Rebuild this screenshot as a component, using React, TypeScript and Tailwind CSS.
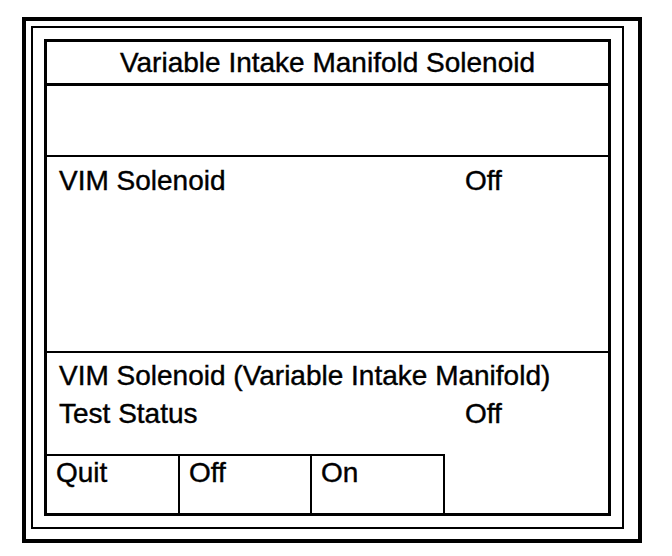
import React from 'react';

const rows = [
  { label: 'VIM Solenoid (Variable Intake Manifold)', value: '' },
  { label: 'Test Status', value: 'Off' },
];

const buttons = ['Quit', 'Off', 'On'];

export default function App() {
  return (
    <div
      className="min-h-screen bg-white pl-[22px] pt-[17px] text-black"
      style={{ fontFamily: '"Liberation Sans", Arial, sans-serif' }}
    >
      <div className="w-[620px] h-[526px] border-4 border-black pt-[5px] pl-[5px] pr-[14px] pb-[10px]">
        <div className="h-full border-2 border-black p-[11px]">
          <div className="h-full border-[3px] border-black flex flex-col text-[28px] leading-[32px] [-webkit-text-stroke:0.4px_black]">
            <div className="h-[44px] shrink-0 border-b-[3px] border-black flex items-center justify-center">
              Variable Intake Manifold Solenoid
            </div>

            <div className="h-[71px] shrink-0 border-b-2 border-black" />

            <div className="h-[196px] shrink-0 border-b-2 border-black pt-[8px] pl-[12px] flex">
              <span className="w-[406px]">VIM Solenoid</span>
              <span>Off</span>
            </div>

            <div className="flex-1 pt-[4px] pl-[12px] leading-[38px]">
              {rows.map(r => (
                <div key={r.label} className="flex">
                  <span className="w-[406px] whitespace-nowrap">{r.label}</span>
                  <span>{r.value}</span>
                </div>
              ))}
            </div>

            <div className="h-[59px] shrink-0 flex">
              {buttons.map((b, i) => (
                <div
                  key={b}
                  className={`${i === 1 ? 'w-[132px]' : 'w-[133px]'} border-t-2 border-r-2 border-black pt-[1px] pl-[9px]`}
                >
                  {b}
                </div>
              ))}
            </div>
          </div>
        </div>
      </div>
    </div>
  );
}
